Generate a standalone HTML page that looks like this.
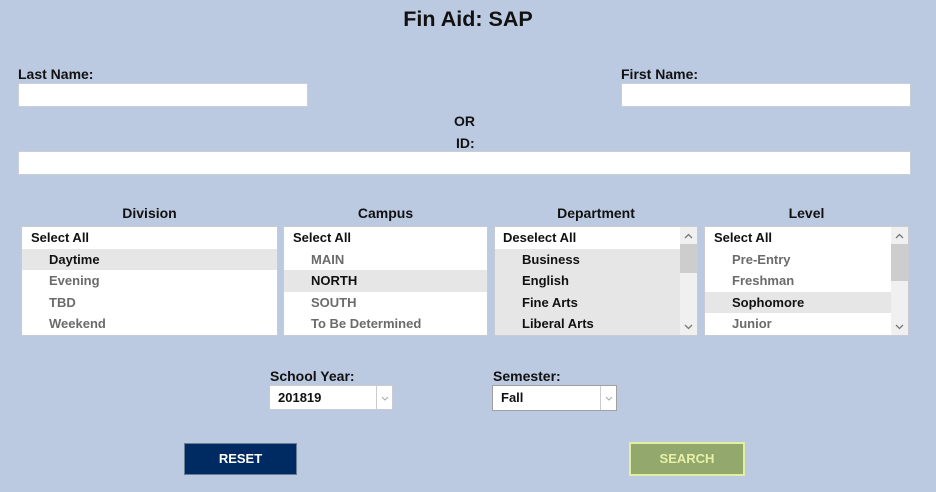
<!DOCTYPE html>
<html><head><style>
*{margin:0;padding:0;box-sizing:border-box}
body{width:936px;height:492px;background:#bccae1;font-family:"Liberation Sans",Arial,sans-serif;font-weight:bold;position:relative;overflow:hidden;color:#111}
.a{position:absolute}
.lbl{font-size:14px}
.inp{position:absolute;background:#fff;border:1px solid #c8cfd8;height:24px}
.box{position:absolute;top:226px;height:110px;background:#fff;border:1px solid #c8ccd2;overflow:hidden}
.row{height:21.6px;line-height:21.6px;font-size:13px;padding-left:27px;color:#6b6b6b}
.row.f{padding-left:9px;color:#111}
.row.s{background:#e6e6e6;color:#111}
.hd{position:absolute;top:205px;font-size:14px;text-align:center}
.sb{position:absolute;right:0;top:0;width:17px;height:100%;background:#f0f0f0}
.sb .t{position:absolute;left:0;width:17px;background:#cdcdcd}
.sb svg{position:absolute;left:4px}
.sel{position:absolute;top:385px;height:26px;background:#fff;border:1px solid #c8ccd2;font-size:13px;line-height:24px;padding-left:8px}
.sel .ar{position:absolute;right:0;top:0;width:16px;height:100%;border-left:1px solid #ccc}
.sel .ar svg{position:absolute;left:4px;top:10px}
</style></head><body>
<div class="a" style="left:0;width:936px;top:7px;text-align:center;font-size:21.5px">Fin Aid: SAP</div>
<div class="a lbl" style="left:18px;top:66px">Last Name:</div>
<div class="inp" style="left:18px;top:83px;width:290px"></div>
<div class="a lbl" style="left:621px;top:66px">First Name:</div>
<div class="inp" style="left:621px;top:83px;width:290px"></div>
<div class="a lbl" style="left:454px;top:113px">OR</div>
<div class="a lbl" style="left:456px;top:135px">ID:</div>
<div class="inp" style="left:18px;top:151px;width:893px"></div>

<div class="hd" style="left:21px;width:257px">Division</div>
<div class="hd" style="left:283px;width:205px">Campus</div>
<div class="hd" style="left:494px;width:204px">Department</div>
<div class="hd" style="left:704px;width:205px">Level</div>

<div class="box" style="left:21px;width:257px">
<div class="row f">Select All</div><div class="row s">Daytime</div><div class="row">Evening</div><div class="row">TBD</div><div class="row">Weekend</div></div>
<div class="box" style="left:283px;width:205px">
<div class="row f">Select All</div><div class="row">MAIN</div><div class="row s">NORTH</div><div class="row">SOUTH</div><div class="row">To Be Determined</div></div>
<div class="box" style="left:494px;width:204px">
<div class="row f" style="padding-left:8px">Deselect All</div><div class="row s" style="margin-right:17px">Business</div><div class="row s" style="margin-right:17px">English</div><div class="row s" style="margin-right:17px">Fine Arts</div><div class="row s" style="margin-right:17px">Liberal Arts</div>
<div class="sb"><svg style="top:6px" width="9" height="6"><path d="M1 5L4.5 1.5L8 5" fill="none" stroke="#777" stroke-width="1.3"/></svg><div class="t" style="top:17px;height:29px"></div><svg style="bottom:5px" width="9" height="6"><path d="M1 1L4.5 4.5L8 1" fill="none" stroke="#777" stroke-width="1.3"/></svg></div></div>
<div class="box" style="left:704px;width:205px">
<div class="row f">Select All</div><div class="row">Pre-Entry</div><div class="row">Freshman</div><div class="row s" style="margin-right:17px">Sophomore</div><div class="row">Junior</div>
<div class="sb"><svg style="top:6px" width="9" height="6"><path d="M1 5L4.5 1.5L8 5" fill="none" stroke="#777" stroke-width="1.3"/></svg><div class="t" style="top:17px;height:37px"></div><svg style="bottom:5px" width="9" height="6"><path d="M1 1L4.5 4.5L8 1" fill="none" stroke="#777" stroke-width="1.3"/></svg></div></div>

<div class="a lbl" style="left:270px;top:368px">School Year:</div>
<div class="sel" style="left:269px;width:124px;top:385px;height:25px">201819<div class="ar"><svg width="8" height="5"><path d="M1 1L4 4L7 1" fill="none" stroke="#aaa"/></svg></div></div>
<div class="a lbl" style="left:493px;top:368px">Semester:</div>
<div class="sel" style="left:492px;width:125px;border-color:#a0a0a0">Fall<div class="ar"><svg width="8" height="5"><path d="M1 1L4 4L7 1" fill="none" stroke="#aaa"/></svg></div></div>

<div class="a" style="left:184px;top:443px;width:113px;height:32px;background:#002b62;border:1px solid #6b7c95;color:#fff;font-size:13px;text-align:center;line-height:30px">RESET</div>
<div class="a" style="left:629px;top:442px;width:116px;height:34px;background:#93a86c;border:2px solid #e2eea0;color:#e8f0a8;font-size:13px;text-align:center;line-height:30px">SEARCH</div>
</body></html>
